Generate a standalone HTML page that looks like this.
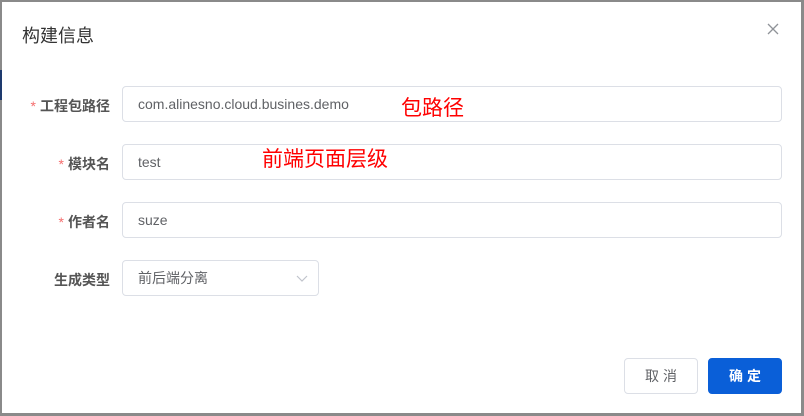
<!DOCTYPE html>
<html><head><meta charset="utf-8"><style>
*{margin:0;padding:0;box-sizing:border-box}
body{width:804px;height:416px;background:#8a8a8a;position:relative;overflow:hidden;font-family:"Liberation Sans","Noto Sans CJK SC",sans-serif}
.dlg{position:absolute;left:2px;top:2px;width:799px;height:411px;background:#fff}
.t{position:absolute;left:22px;top:22px;font-size:18px;color:#333}
.x{position:absolute;left:766px;top:22px}
.lab{position:absolute;font-size:14px;color:#555;font-weight:bold;text-align:right;width:110px;left:0}
.lab i{color:#f56c6c;font-style:normal;margin-right:4px;font-weight:normal}
.in{position:absolute;left:122px;width:660px;height:36px;border:1px solid #dcdfe6;border-radius:4px;font-size:14px;color:#606266;padding-left:15px;line-height:34px}
.red{position:absolute;color:#f00;font-size:21px}
.btn{position:absolute;top:358px;width:74px;height:36px;border-radius:4px;font-size:14px;line-height:34px;text-align:center;letter-spacing:4px;padding-left:4px}
</style></head><body>
<div style="position:absolute;left:0;top:70px;width:2px;height:30px;background:#1e3a6e"></div>
<div class="dlg"></div>
<div class="t">构建信息</div>
<svg class="x" width="14" height="14" viewBox="0 0 14 14"><path d="M2 2L12 12M12 2L2 12" stroke="#909399" stroke-width="1.3"/></svg>
<div class="lab" style="top:96px"><i>*</i>工程包路径</div>
<div class="in" style="top:86px">com.alinesno.cloud.busines.demo</div>
<div class="lab" style="top:154px"><i>*</i>模块名</div>
<div class="in" style="top:144px">test</div>
<div class="lab" style="top:212px"><i>*</i>作者名</div>
<div class="in" style="top:202px">suze</div>
<div class="lab" style="top:270px">生成类型</div>
<div class="in" style="top:260px;width:197px">前后端分离
<svg style="position:absolute;left:173px;top:14px" width="12" height="8" viewBox="0 0 12 8"><path d="M1 1L6 6L11 1" stroke="#c0c4cc" fill="none" stroke-width="1.2"/></svg></div>
<div class="red" style="left:401px;top:92px">包路径</div>
<div class="red" style="left:262px;top:143px">前端页面层级</div>
<div class="btn" style="left:624px;border:1px solid #dcdfe6;color:#606266">取消</div>
<div class="btn" style="left:708px;background:#0a5fd8;border:1px solid #0a5fd8;color:#fff;font-weight:bold">确定</div>
</body></html>
